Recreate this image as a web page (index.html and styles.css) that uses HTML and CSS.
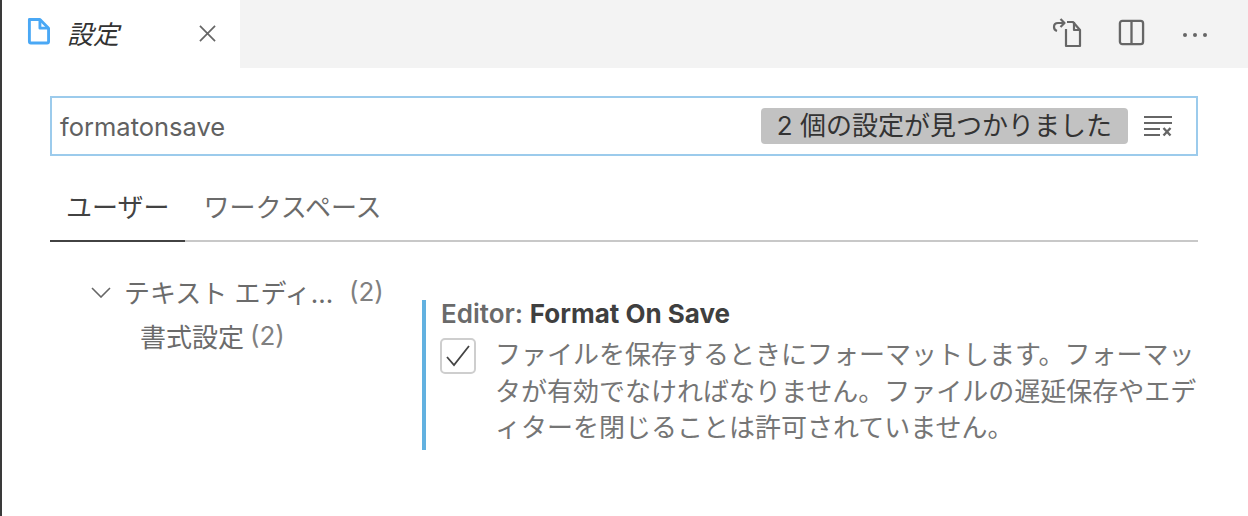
FILE: index.html
```html
<!DOCTYPE html>
<html lang="ja">
<head>
<meta charset="utf-8">
<title>設定</title>
<link rel="stylesheet" href="styles.css">
</head>
<body>
<div class="window">
  <header class="tabbar">
    <div class="tab">
      <svg class="file-icon" width="23" height="27" viewBox="0 0 24 28" fill="none" stroke="#4aa8f5" stroke-width="3" stroke-linejoin="round"><path d="M2.5 1.5H13.5L22.5 10.5V24.5Q22.5 26 21 26H4Q2.5 26 2.5 24.5Z"/><path d="M13.5 1.5V10.5H22.5"/></svg>
      <span class="tab-title">設定</span>
      <svg class="tab-close" width="17" height="17" viewBox="0 0 18 18" stroke="#666" stroke-width="1.8" fill="none"><path d="M1 1L17 17M17 1L1 17"/></svg>
    </div>
    <div class="actions">
      <svg width="30" height="30" viewBox="0 0 30 30" fill="none" stroke="#666" stroke-width="2.2" stroke-linejoin="round"><path d="M14 11V28H28V12L21 4H15"/><path d="M22 4V12H28"/><path d="M12 5H6Q2 5 2 9Q2 12 5 13"/><path d="M8.5 1L12.5 5L8.5 9"/></svg>
      <svg width="27" height="27" viewBox="0 0 28 28" fill="none" stroke="#666" stroke-width="2.4"><rect x="2" y="2" width="24" height="24" rx="2.5"/><path d="M14 2V26"/></svg>
      <svg class="more" width="26" height="6" viewBox="0 0 26 6" fill="#666"><circle cx="3" cy="3" r="2"/><circle cx="13" cy="3" r="2"/><circle cx="23" cy="3" r="2"/></svg>
    </div>
  </header>
  <main class="content">
    <div class="search">
      <span class="query">formatonsave</span>
      <span class="count">2 個の設定が見つかりました</span>
      <svg class="clear" width="30" height="22" viewBox="0 0 30 22" stroke="#666" stroke-width="2" fill="none"><path d="M1 2H29M1 8H29M1 14H17M1 20H17"/><path d="M20.5 13L27.5 20.5M27.5 13L20.5 20.5" stroke-width="2.4"/></svg>
    </div>
    <nav class="scopes">
      <span class="scope active">ユーザー</span>
      <span class="scope">ワークスペース</span>
    </nav>
    <div class="body">
      <aside class="toc">
        <div class="toc-row toc-top">
          <svg class="chev" width="20" height="11" viewBox="0 0 20 11" fill="none" stroke="#666" stroke-width="1.6"><path d="M1 1L10 10L19 1"/></svg>
          <span class="toc-label">テキスト エディ...</span>
          <span class="toc-num">(2)</span>
        </div>
        <div class="toc-row toc-sub">書式設定 <span class="toc-num">(2)</span></div>
      </aside>
      <section class="setting">
        <div class="setting-title"><span class="cat">Editor: </span><span class="name">Format On Save</span></div>
        <div class="setting-row">
          <span class="checkbox"><svg width="26" height="24" viewBox="0 0 26 24" fill="none" stroke="#444" stroke-width="1.8"><path d="M2 13L9 21L24 2"/></svg></span>
          <p class="desc">ファイルを保存するときにフォーマットします。フォーマッタが有効でなければなりません。ファイルの遅延保存やエディターを閉じることは許可されていません。</p>
        </div>
      </section>
    </div>
  </main>
</div>
</body>
</html>
```
FILE: styles.css
```css
* { box-sizing: border-box; }
html, body { margin: 0; height: 100%; background: #fff; }
body {
  font-family: Inter, "Noto Sans CJK JP", "Noto Sans", sans-serif;
  font-size: 26px;
  color: #6b6b6b;
  overflow: hidden;
}
.window {
  height: 516px;
  border-left: 2px solid #3a3a3a;
  display: flex;
  flex-direction: column;
}
.tabbar {
  height: 68px;
  background: #f3f3f3;
  display: flex;
  justify-content: space-between;
  flex: none;
}
.tab {
  width: 238px;
  background: #fff;
  display: flex;
  align-items: center;
  padding-left: 25px;
}
.file-icon { margin-top: -5px; }
.tab-title {
  margin-left: 17px;
  font-size: 26px;
  font-style: italic;
  color: #333;
  width: 132px;
  margin-top: -3px;
}
.tab-close { margin-top: -1px; }
.actions {
  display: flex;
  align-items: center;
  padding-right: 40px;
  padding-bottom: 2px;
}
.actions svg:nth-child(1) { margin-right: 36px; }
.actions svg:nth-child(2) { margin-right: 37px; margin-top: -2px; }
.actions .more { margin-top: 3px; }
.content {
  flex: 1;
  padding: 28px 50px 0 48px;
}
.search {
  height: 60px;
  border: 2px solid #9ccbec;
  display: flex;
  align-items: center;
  padding: 0 23px 0 8px;
}
.query { flex: 1; font-size: 25.5px; color: #616161; }
.count {
  background: #c2c2c2;
  color: #333;
  height: 36px;
  line-height: 36px;
  padding: 0 16px;
  border-radius: 4px;
  font-size: 26px;
  white-space: nowrap;
}
.clear { margin-left: 15px; }
.scopes {
  display: flex;
  margin-top: 28px;
  height: 58px;
  border-bottom: 2px solid #c8c8c8;
}
.scope {
  height: 58px;
  padding: 0 16px;
  line-height: 48px;
  white-space: nowrap;
}
.scope + .scope { margin-left: 2px; }
.scope.active {
  color: #424242;
  border-bottom: 2px solid #424242;
}
.body { display: flex; }
.toc { width: 372px; flex: none; padding-top: 26px; }
.toc-row { display: flex; align-items: center; height: 46px; white-space: nowrap; }
.toc-top { padding-left: 41px; }
.chev { margin-right: 13px; margin-top: 3px; }
.toc-label { width: 225px; }
.toc-num { color: #808080; }
.toc-sub { padding-left: 90px; gap: 6px; margin-top: -2px; }
.setting {
  flex: 1;
  margin-top: 58px;
  height: 150px;
  border-left: 4px solid #62b1e0;
  padding: 0 0 0 15px;
}
.setting-title { line-height: 28px; white-space: nowrap; }
.cat { font-weight: 600; color: #6a6a6a; }
.name { font-weight: 700; color: #3f3f3f; }
.setting-row { display: flex; margin-top: 10px; }
.checkbox {
  width: 36px;
  height: 36px;
  flex: none;
  border: 2px solid #cecece;
  border-radius: 5px;
  display: flex;
  align-items: center;
  justify-content: center;
  margin-right: 19px;
  margin-left: -1px;
}
.desc {
  margin: -1px 0 0;
  font-size: 26px;
  line-height: 36.5px;
  color: #757575;
  width: 703px;
}
```
